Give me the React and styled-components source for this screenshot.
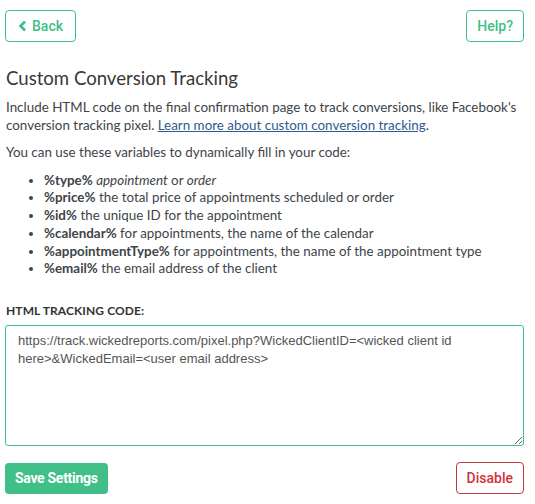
import React from "react";
import styled, { createGlobalStyle } from "styled-components";

const Global = createGlobalStyle`
  html, body { margin: 0; padding: 0; background: #fff; }
  body { font-family: "Lato", "Noto Sans", sans-serif; color: #404448; }
  * { box-sizing: border-box; }
`;

const Page = styled.div`
  width: 535px;
  padding: 10px 11px 0 5px;
`;

const TopBar = styled.div`
  display: flex;
  justify-content: space-between;
  align-items: center;
`;

const OutlineButton = styled.button`
  display: inline-flex;
  align-items: center;
  gap: 5px;
  height: 32px;
  padding: 0 ${(p) => p.$px || 13}px;
  background: #fff;
  border: 1px solid ${(p) => (p.$danger ? "#c0393b" : "#3fbf88")};
  border-radius: 4px;
  color: ${(p) => (p.$danger ? "#d0343a" : "#3fbf88")};
  font-family: "Roboto", sans-serif;
  font-size: 14px;
  font-weight: 500;
  cursor: pointer;
`;

const SolidButton = styled.button`
  height: 31px;
  padding: 0 10px;
  background: #40bf89;
  border: none;
  border-radius: 4px;
  color: #fff;
  font-family: "Roboto", sans-serif;
  font-size: 14px;
  font-weight: 700;
  letter-spacing: -0.3px;
  cursor: pointer;
`;

const Title = styled.h2`
  margin: 24px 0 9px 1px;
  font-size: 18.6px;
  font-weight: 400;
  color: #383838;
  line-height: 24px;
`;

const Para = styled.p`
  margin: 0 0 10px 1px;
  font-size: 13.4px;
  line-height: 17.5px;
`;

const Link = styled.a`
  color: #2e5c8f;
  text-decoration: underline;
`;

const List = styled.ul`
  margin: 0;
  padding-left: 39px;
  font-size: 13.4px;
  line-height: 17.8px;
`;

const Item = styled.li``;

const Label = styled.label`
  display: block;
  margin: 25px 0 7px 1px;
  font-size: 12px;
  line-height: 15px;
  font-weight: 700;
  letter-spacing: 0.1px;
  color: #333;
`;

const CodeBox = styled.textarea`
  display: block;
  width: 100%;
  height: 121px;
  padding: 6px 12px;
  border: 1px solid #3fbf88;
  border-radius: 3px;
  font-family: "Liberation Sans", Arial, sans-serif;
  font-size: 13px;
  line-height: 18px;
  color: #555;
  resize: vertical;
  outline: none;
`;

const Footer = styled.div`
  display: flex;
  justify-content: space-between;
  align-items: center;
  margin-top: 16px;
`;

const Chevron = () => (
  <svg width="9" height="12" viewBox="0 0 9 12">
    <path d="M7 1.5 L2.5 6 L7 10.5" fill="none" stroke="#3fbf88" strokeWidth="2.6" strokeLinejoin="miter" />
  </svg>
);

const vars = [
  ["%type%", (<><i>appointment</i> or <i>order</i></>)],
  ["%price%", "the total price of appointments scheduled or order"],
  ["%id%", "the unique ID for the appointment"],
  ["%calendar%", "for appointments, the name of the calendar"],
  ["%appointmentType%", "for appointments, the name of the appointment type"],
  ["%email%", "the email address of the client"],
];

export default function App() {
  return (
    <>
      <Global />
      <Page>
        <TopBar>
          <OutlineButton $px={12}>
            <Chevron /> Back
          </OutlineButton>
          <OutlineButton $px={10}>Help?</OutlineButton>
        </TopBar>
        <Title>Custom Conversion Tracking</Title>
        <Para>
          Include HTML code on the final confirmation page to track conversions, like Facebook's
          conversion tracking pixel. <Link href="#">Learn more about custom conversion tracking</Link>.
        </Para>
        <Para>You can use these variables to dynamically fill in your code:</Para>
        <List>
          {vars.map(([k, v]) => (
            <Item key={k}>
              <b>{k}</b> {v}
            </Item>
          ))}
        </List>
        <Label>HTML TRACKING CODE:</Label>
        <CodeBox
          defaultValue="https://track.wickedreports.com/pixel.php?WickedClientID=<wicked client id here>&WickedEmail=<user email address>"
        />
        <Footer>
          <SolidButton>Save Settings</SolidButton>
          <OutlineButton $danger $px={10}>Disable</OutlineButton>
        </Footer>
      </Page>
    </>
  );
}
